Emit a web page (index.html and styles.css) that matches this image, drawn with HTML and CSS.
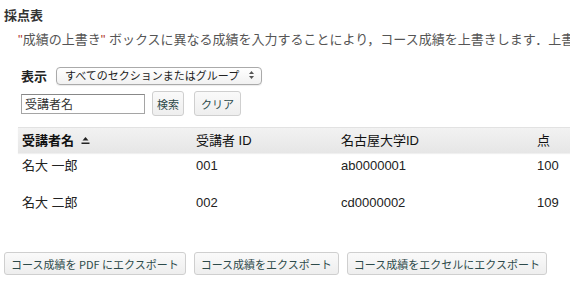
FILE: index.html
```html
<!DOCTYPE html>
<html>
<head>
    <meta charset="utf-8">
    <title>採点表</title>
    <link rel="stylesheet" href="styles.css">
</head>
<body>
<div class="page">
    <h1 class="title">採点表</h1>
    <p class="note"><span class="q">"</span>成績の上書き<span class="q">"</span> ボックスに異なる成績を入力することにより，コース成績を上書きします．上書きした成績はコース成績として保存されます．</p>

    <div class="view-row">
        <label class="view-label">表示</label>
        <span class="select-wrap">
            <select class="view-select">
                <option>すべてのセクションまたはグループ</option>
            </select>
            <svg class="select-arrows" width="7" height="10" viewBox="0 0 7 10">
                <path d="M3.5 1 L6 4 L1 4 Z" fill="#555"/>
                <path d="M3.5 9 L6 6 L1 6 Z" fill="#555"/>
            </svg>
        </span>
    </div>

    <div class="search-row">
        <input type="text" class="search-input" value="受講者名">
        <button class="btn">検索</button>
        <button class="btn">クリア</button>
    </div>

    <div class="grid">
        <div class="row head">
            <div class="cell c1 sorted">受講者名
                <svg class="sort-icon" width="9" height="8" viewBox="0 0 9 8">
                    <path d="M4.5 0 L7.5 3.5 L1.5 3.5 Z" fill="#222"/>
                    <rect x="0.5" y="5.5" width="8" height="1.5" fill="#222"/>
                </svg>
            </div>
            <div class="cell c2">受講者 ID</div>
            <div class="cell c3">名古屋大学ID</div>
            <div class="cell c4">点</div>
        </div>
        <div class="row">
            <div class="cell c1">名大 一郎</div>
            <div class="cell c2">001</div>
            <div class="cell c3">ab0000001</div>
            <div class="cell c4">100</div>
        </div>
        <div class="row">
            <div class="cell c1">名大 二郎</div>
            <div class="cell c2">002</div>
            <div class="cell c3">cd0000002</div>
            <div class="cell c4">109</div>
        </div>
    </div>

    <div class="export-row">
        <button class="btn big">コース成績を PDF にエクスポート</button>
        <button class="btn big">コース成績をエクスポート</button>
        <button class="btn big">コース成績をエクセルにエクスポート</button>
    </div>
</div>
</body>
</html>
```

FILE: styles.css
```css
/* 採点表ページ */
html, body { margin: 0; padding: 0; background: #fff; }
body { font-family: "Liberation Sans", "Noto Sans CJK JP", sans-serif; color: #333; overflow: hidden; }
.page { padding: 8px 0 0 4px; width: 566px; overflow: hidden; }

.title { margin: 0; font-size: 13px; line-height: 16px; font-weight: bold; color: #333; }
.note { margin: 8px 0 0 14px; font-size: 13px; line-height: 16px; color: #555; white-space: nowrap; }
.note .q { color: #b03a2e; }

.view-row { display: flex; align-items: center; margin: 18px 0 0 17px; height: 18px; }
.view-label { font-size: 13px; font-weight: bold; color: #222; margin-right: 9px; }
.select-wrap { position: relative; display: inline-block; }
.view-select { -webkit-appearance: none; appearance: none; width: 206px; height: 18px; padding: 0 16px 0 8px; font-family: inherit; font-size: 11px; color: #222; border: 1px solid #aaa; border-radius: 4px; background: linear-gradient(#fff, #f1f1f1); box-shadow: 0 1px 1px rgba(0,0,0,0.08); }
.select-arrows { position: absolute; right: 7px; top: 4px; pointer-events: none; }

.search-row { display: flex; align-items: center; gap: 7px; margin: 7px 0 0 17px; height: 25px; }
.search-input { width: 124px; height: 20px; box-sizing: border-box; padding: 0 3px; font-family: inherit; font-size: 12px; color: #333; border: 1px solid #a5a5a5; border-top-color: #888; }
.btn { height: 25px; padding: 0 6px; font-family: "Noto Sans CJK JP", sans-serif; font-size: 11px; color: #2d4a4a; background: linear-gradient(#fafafa, #eeeeee); border: 1px solid #cfcfcf; border-radius: 3px; cursor: pointer; }
.search-row .btn { padding: 0 4px; }
.search-row .btn + .btn { margin-left: 3px; padding: 0 6px; }

.grid { margin: 11px 0 0 14px; width: 600px; font-size: 13px; color: #222; }
.row { display: flex; height: 37px; }
.row.head { height: 26px; align-items: center; background: linear-gradient(#f2f2f2, #e6e6e6); border-top: 1px solid #e2e2e2; box-sizing: border-box; box-shadow: 0 1px 1px rgba(0,0,0,0.06); }
.cell { padding: 5px 4px 0; box-sizing: border-box; line-height: 16px; }
.head .cell { padding-top: 0; color: #111; }
.c1 { width: 174px; }
.c2 { width: 145px; }
.c3 { width: 196px; }
.c4 { width: 80px; }
.sorted { font-weight: bold; }
.sort-icon { margin-left: 3px; vertical-align: 0; }

.export-row { display: flex; gap: 8px; margin-top: 25px; }
.btn.big { height: 23px; padding: 0 6px; }
```
